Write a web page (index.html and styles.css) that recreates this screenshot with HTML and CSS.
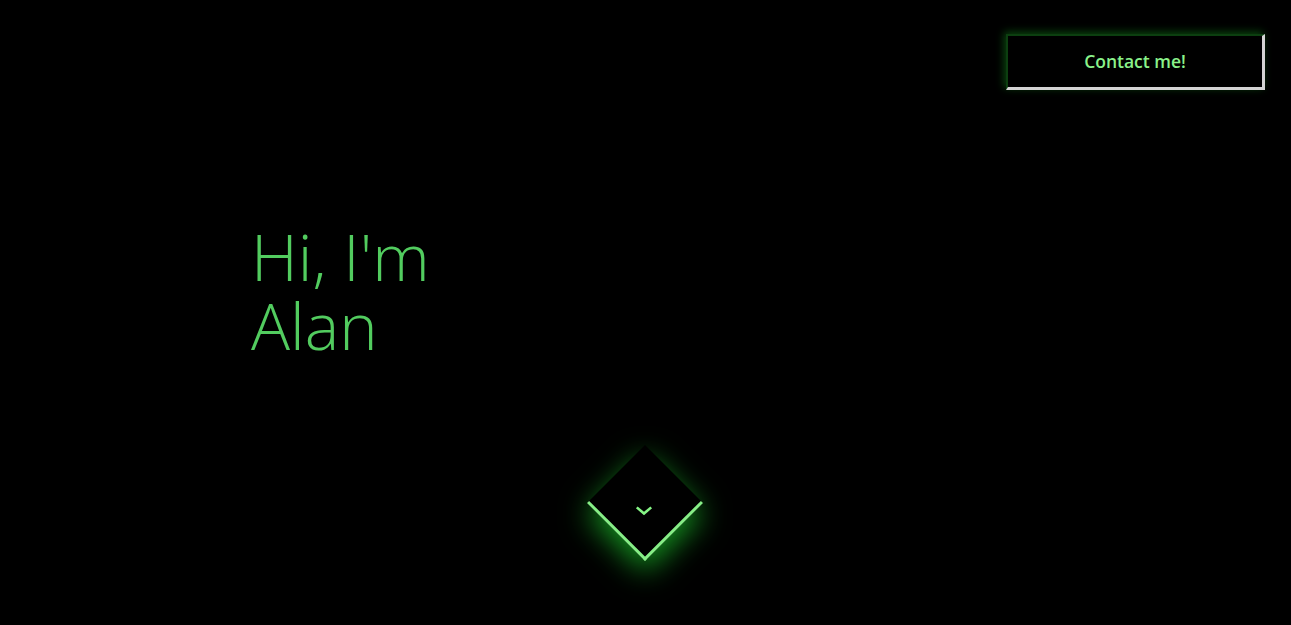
FILE: index.html
```html
<!DOCTYPE html>
<html lang="en">
<head>
<meta charset="utf-8">
<title>Alan</title>
<link rel="stylesheet" href="styles.css">
</head>
<body>
<div class="page">
  <header class="topbar">
    <a class="contact" href="#">Contact me!</a>
  </header>
  <main class="hero">
    <h1 class="title">Hi, I'm<br>Alan</h1>
  </main>
  <div class="scroll-wrap">
    <a class="scroll" href="#">
      <svg class="chev" width="18" height="10" viewBox="0 0 18 10"><path d="M1.8 1.8 L9 8 L16.2 1.8" fill="none" stroke="#86f586" stroke-width="2.6"/></svg>
    </a>
  </div>
</div>
</body>
</html>
```
FILE: styles.css
```css
html, body {
  margin: 0;
  padding: 0;
  background: #000;
  height: 100%;
  overflow: hidden;
}
.page {
  height: 625px;
  display: flex;
  flex-direction: column;
  font-family: "Open Sans", "Liberation Sans", sans-serif;
}
.topbar {
  display: flex;
  justify-content: flex-end;
  padding: 34px 26px 0 0;
}
.contact {
  box-sizing: border-box;
  width: 259px;
  height: 56px;
  display: flex;
  align-items: center;
  justify-content: center;
  padding-bottom: 2px;
  color: #8af28a;
  text-decoration: none;
  font-size: 17.5px;
  font-weight: 550;
  background: #000;
  border-top: 2px solid #0c3f10;
  border-left: 2px solid #0c3f10;
  border-right: 3px solid #d4d4d4;
  border-bottom: 3px solid #d4d4d4;
  box-shadow: -2px -2px 8px rgba(30, 200, 40, 0.35);
}
.hero {
  padding: 132px 0 0 251px;
}
.title {
  margin: 0;
  color: #52cc5f;
  font-weight: 300;
  font-size: 65px;
  line-height: 69px;
}
.scroll-wrap {
  display: flex;
  justify-content: center;
  padding-top: 102px;
  padding-right: 1px;
}
.scroll {
  box-sizing: border-box;
  width: 82px;
  height: 82px;
  background: #000;
  transform: rotate(45deg);
  border-right: 3px solid #86ee86;
  border-bottom: 3px solid #86ee86;
  box-shadow: 8px 8px 30px rgba(30, 210, 45, 0.7);
  display: flex;
  align-items: center;
  justify-content: center;
}
.chev {
  transform: rotate(-45deg) translate(-1px, 9px);
}
```
